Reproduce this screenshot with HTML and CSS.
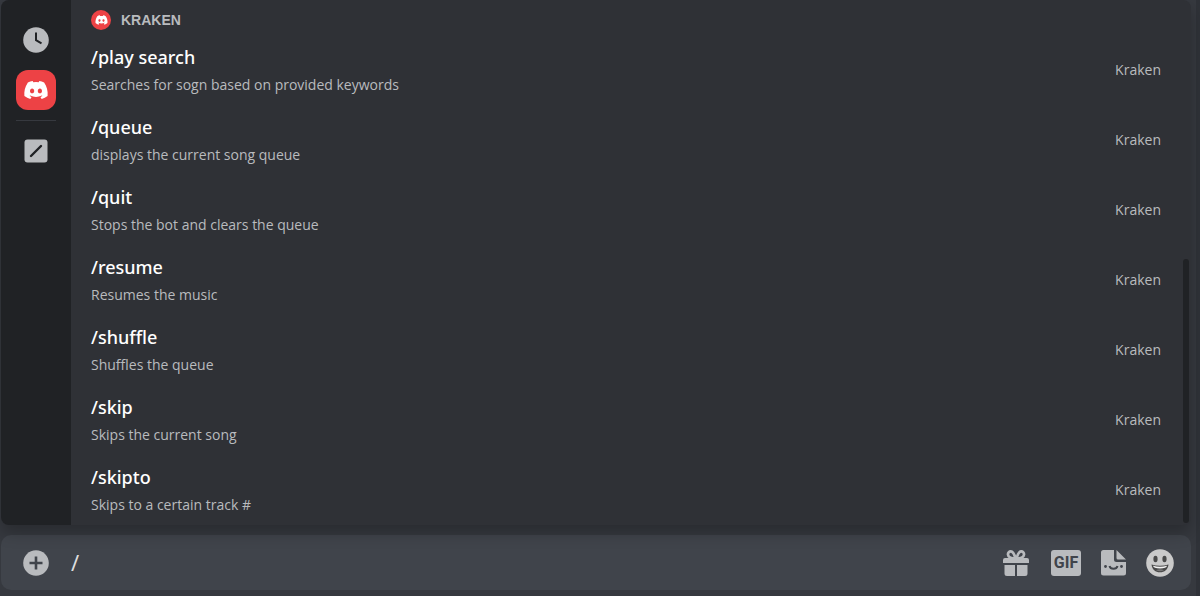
FILE: index.html
```
<!DOCTYPE html>
<html lang="en">
<head>
    <meta charset="UTF-8">
    <meta name="viewport" content="width=device-width, initial-scale=1.0">
    <title>Kraken commands</title>
    <link rel="stylesheet" href="styles.css">
</head>
<body>
    <svg class="sprite" aria-hidden="true">
        <symbol id="logo" viewBox="0 0 28 20">
            <path fill="currentColor" d="M23.02 1.68C21.31.88 19.51.32 17.66 0c-.25.46-.48.93-.69 1.42a20 20 0 0 0-5.94 0C10.82.93 10.59.46 10.34 0 8.48.32 6.68.89 4.97 1.68 1.57 6.78.65 11.75 1.11 16.65A20 20 0 0 0 7.69 20c.53-.73 1-1.5 1.41-2.31a14 14 0 0 1-2.22-1.08l.54-.43a15.3 15.3 0 0 0 13.16 0l.54.43c-.71.43-1.45.79-2.22 1.08.4.81.87 1.58 1.4 2.31a20 20 0 0 0 6.59-3.35c.54-5.68-.92-10.6-3.87-14.97zM9.68 13.64c-1.28 0-2.34-1.19-2.34-2.64s1.03-2.65 2.34-2.65 2.36 1.2 2.34 2.65c0 1.45-1.04 2.64-2.34 2.64zm8.64 0c-1.28 0-2.34-1.19-2.34-2.64s1.03-2.65 2.34-2.65 2.36 1.2 2.34 2.65c0 1.45-1.03 2.64-2.34 2.64z"/>
        </symbol>
    </svg>

    <main class="chat">
        <section class="popup">
            <nav class="rail">
                <button class="railbtn" aria-label="Frequently used">
                    <svg width="26" height="26" viewBox="0 0 26 26">
                        <circle cx="13" cy="13" r="12.8" fill="#b9bbbe"/>
                        <path d="M13 5.5V13.2L18.5 16.3" fill="none" stroke="#202225" stroke-width="2"/>
                    </svg>
                </button>
                <button class="railbtn selected" aria-label="Kraken">
                    <svg width="26" height="18"><use href="#logo"/></svg>
                </button>
                <hr class="divider">
                <button class="railbtn" aria-label="Built-in">
                    <svg width="24" height="24" viewBox="0 0 24 24">
                        <rect x="0.5" y="0.5" width="23" height="23" rx="3" fill="#b9bbbe"/>
                        <path d="M7 17L17 7" stroke="#202225" stroke-width="2.4" stroke-linecap="round"/>
                    </svg>
                </button>
            </nav>

            <div class="commands">
                <h2 class="appname">
                    <span class="appicon"><svg width="13" height="10"><use href="#logo"/></svg></span>
                    KRAKEN
                </h2>
                <ul class="list">
                    <li class="command">
                        <div><h3>/play search</h3><p>Searches for sogn based on provided keywords</p></div>
                        <span class="source">Kraken</span>
                    </li>
                    <li class="command">
                        <div><h3>/queue</h3><p>displays the current song queue</p></div>
                        <span class="source">Kraken</span>
                    </li>
                    <li class="command">
                        <div><h3>/quit</h3><p>Stops the bot and clears the queue</p></div>
                        <span class="source">Kraken</span>
                    </li>
                    <li class="command">
                        <div><h3>/resume</h3><p>Resumes the music</p></div>
                        <span class="source">Kraken</span>
                    </li>
                    <li class="command">
                        <div><h3>/shuffle</h3><p>Shuffles the queue</p></div>
                        <span class="source">Kraken</span>
                    </li>
                    <li class="command">
                        <div><h3>/skip</h3><p>Skips the current song</p></div>
                        <span class="source">Kraken</span>
                    </li>
                    <li class="command">
                        <div><h3>/skipto</h3><p>Skips to a certain track #</p></div>
                        <span class="source">Kraken</span>
                    </li>
                </ul>
                <div class="thumb"></div>
            </div>
        </section>

        <form class="inputbar">
            <button type="button" aria-label="Attach">
                <svg width="26" height="26" viewBox="0 0 26 26">
                    <circle cx="13" cy="13" r="12.8" fill="#b9bbbe"/>
                    <path d="M13 6.5V19.5M6.5 13H19.5" stroke="#40444b" stroke-width="2.6"/>
                </svg>
            </button>
            <input type="text" class="message" aria-label="Message" value="/">
            <div class="tools">
                <button type="button" aria-label="Gift">
                    <svg width="28" height="26" viewBox="0 0 28 26">
                        <path d="M12.5 8.5C11 3 9.5 1.4 7.8 1.4S4.8 2.9 5 4.6 7 8.5 12.5 8.5zM13.5 8.5C15 3 16.5 1.4 18.2 1.4S21.2 2.9 21 4.6 19 8.5 13.5 8.5z" fill="none" stroke="#b9bbbe" stroke-width="2.7"/>
                        <path d="M2 8H24Q26 8 26 10V13H0V10Q0 8 2 8zM1.5 15H12V26H4Q1.5 26 1.5 23.5zM14 15H24.5V23.5Q24.5 26 22 26H14z" fill="#b9bbbe"/>
                    </svg>
                </button>
                <button type="button" aria-label="GIF"><span class="gif">GIF</span></button>
                <button type="button" aria-label="Stickers">
                    <svg width="25" height="26" viewBox="0 0 25 26">
                        <path d="M2.5 0H13V9.5Q13 12 15.5 12H25V23Q25 25.5 22.5 25.5H2.5Q0 25.5 0 23V2.5Q0 0 2.5 0zM15.5 0L25 9.5H17Q15.5 9.5 15.5 8z" fill="#b9bbbe"/>
                        <circle cx="4.5" cy="16.5" r="1.4" fill="#40444b"/>
                        <circle cx="20.5" cy="16.5" r="1.4" fill="#40444b"/>
                        <path d="M8.5 16C9.5 19.8 15.5 19.8 16.5 16" fill="none" stroke="#40444b" stroke-width="2"/>
                    </svg>
                </button>
                <button type="button" aria-label="Emoji">
                    <svg width="28" height="28" viewBox="0 0 28 28">
                        <circle cx="14" cy="14" r="13.8" fill="#cacaca"/>
                        <ellipse cx="9.5" cy="10" rx="2.1" ry="3.2" fill="#484848"/>
                        <ellipse cx="18.5" cy="10" rx="2.1" ry="3.2" fill="#484848"/>
                        <path d="M5.5 15.5Q14 18 22.5 15.5C22 20.5 18.5 23.3 14 23.3S6 20.5 5.5 15.5z" fill="#484848"/>
                        <path d="M7 16.8Q14 18.8 21 16.8Q20.5 19.5 14 19.5T7 16.8z" fill="#f2f2f2"/>
                        <path d="M10 21.2Q14 19.5 18 21.2Q16 22.3 14 22.3T10 21.2z" fill="#777"/>
                    </svg>
                </button>
            </div>
        </form>
    </main>
</body>
</html>
```
FILE: styles.css
```
* {
    box-sizing: border-box;
    margin: 0;
    padding: 0;
}

body {
    background-color: #36393f;
    font-family: "Noto Sans", sans-serif;
    color: #b9bbbe;
    overflow: hidden;
}

button {
    border: none;
    background: none;
    color: inherit;
    cursor: pointer;
}

svg {
    display: block;
}

.sprite {
    position: absolute;
    width: 0;
    height: 0;
}

.chat {
    display: flex;
    flex-direction: column;
    gap: 10px;
    padding: 0 5px 6px 1px;
    margin-right: 4px;
    box-shadow: 4px 0 0 #2f3238;
}

.popup {
    display: flex;
    position: relative;
    background-color: #2f3136;
    border-radius: 8px;
    box-shadow: 0 8px 16px rgba(0, 0, 0, 0.24);
}

.rail {
    display: flex;
    flex-direction: column;
    align-items: center;
    gap: 10px;
    width: 70px;
    padding-top: 20px;
    background-color: #202225;
    border-radius: 8px 0 0 8px;
}

.railbtn {
    display: flex;
    align-items: center;
    justify-content: center;
    width: 40px;
    height: 40px;
}

.selected {
    background-color: #ed4245;
    color: #fff;
    border-radius: 12px;
}

.divider {
    width: 40px;
    border: none;
    border-top: 1px solid #36393f;
}

.commands {
    flex: 1;
    position: relative;
    padding: 0 30px 0 20px;
}

.appname {
    display: flex;
    align-items: center;
    gap: 10px;
    height: 35px;
    padding-top: 5px;
    font-family: "Liberation Sans", sans-serif;
    font-size: 14px;
    font-weight: 700;
}

.appicon {
    display: flex;
    align-items: center;
    justify-content: center;
    width: 20px;
    height: 20px;
    background-color: #ed4245;
    color: #fff;
    border-radius: 50%;
}

.list {
    list-style: none;
}

.command {
    display: flex;
    align-items: center;
    justify-content: space-between;
    height: 70px;
}

.command h3 {
    font-size: 18px;
    font-weight: 500;
    line-height: 22px;
    color: #fff;
    margin-bottom: 8px;
}

.command p,
.source {
    font-family: "Open Sans", sans-serif;
    font-size: 14px;
    line-height: 18px;
}

.thumb {
    position: absolute;
    right: 2px;
    bottom: 2px;
    width: 6px;
    height: 264px;
    background-color: #202225;
    border-radius: 3px;
}

.inputbar {
    display: flex;
    align-items: center;
    height: 55px;
    padding: 0 17px 0 22px;
    background-color: #40444b;
    border-radius: 10px;
}

.message {
    flex: 1;
    min-width: 0;
    margin-left: 22px;
    padding-bottom: 2px;
    border: none;
    outline: none;
    background: none;
    color: #dcddde;
    font-family: inherit;
    font-size: 22px;
}

.tools {
    display: flex;
    align-items: center;
    gap: 20px;
}

.gif {
    display: block;
    width: 30px;
    background-color: #b9bbbe;
    border-radius: 3px;
    color: #40444b;
    font-family: Roboto, sans-serif;
    font-size: 16px;
    font-weight: 700;
    line-height: 26px;
}
```
